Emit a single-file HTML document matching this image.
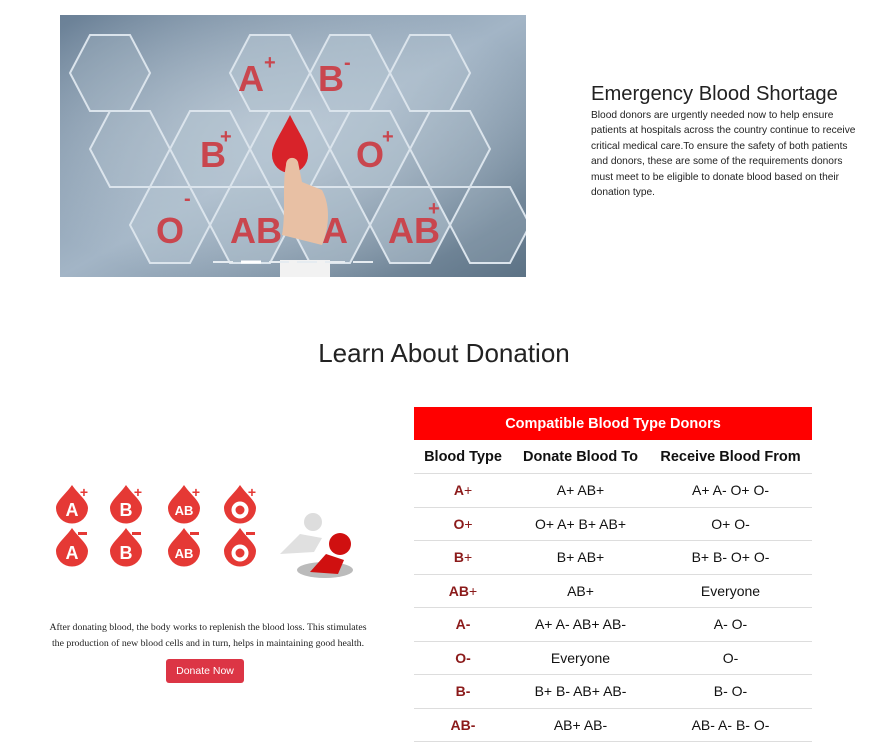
<!DOCTYPE html>
<html><head><meta charset="utf-8"><style>
*{margin:0;padding:0;box-sizing:border-box}
body{width:888px;height:753px;background:#fff;font-family:"Liberation Sans","DejaVu Sans",sans-serif;color:#212529;position:relative;overflow:hidden}
.abs{position:absolute}
h2{font-weight:400}
table{border-collapse:collapse;width:398px}
td,th{text-align:center;height:33.5px;border-bottom:1px solid #ddd;font-size:14px;color:#111}
th{font-weight:700;font-size:14.5px}
td.t{color:#8b1a1a;font-weight:700}
td.t span{font-weight:400}
</style></head><body>

<svg class="abs" style="left:60px;top:15px" width="466" height="262" viewBox="0 0 466 262">
<defs>
<linearGradient id="bg" x1="0" y1="0" x2="1" y2="1"><stop offset="0" stop-color="#6a8096"/><stop offset=".5" stop-color="#a3b5c6"/><stop offset="1" stop-color="#5c7285"/></linearGradient>
<radialGradient id="gl" cx=".45" cy=".45" r=".6"><stop offset="0" stop-color="#c8d4de" stop-opacity=".7"/><stop offset="1" stop-color="#c8d4de" stop-opacity="0"/></radialGradient>
</defs>
<rect width="466" height="262" fill="url(#bg)"/>
<rect width="466" height="262" fill="url(#gl)"/>
<g fill="#b3c2cf" fill-opacity=".55" stroke="#dbe4ec" stroke-width="2">
<polygon points="190,20 230,20 250,58 230,96 190,96 170,58"/>
<polygon points="270,20 310,20 330,58 310,96 270,96 250,58"/>
<polygon points="130,96 170,96 190,134 170,172 130,172 110,134"/>
<polygon points="210,96 250,96 270,134 250,172 210,172 190,134"/>
<polygon points="290,96 330,96 350,134 330,172 290,172 270,134"/>
<polygon points="90,172 130,172 150,210 130,248 90,248 70,210"/>
<polygon points="170,172 210,172 230,210 210,248 170,248 150,210"/>
<polygon points="250,172 290,172 310,210 290,248 250,248 230,210"/>
<polygon points="330,172 370,172 390,210 370,248 330,248 310,210"/>
<polygon points="30,20 70,20 90,58 70,96 30,96 10,58" fill-opacity=".25"/>
<polygon points="350,20 390,20 410,58 390,96 350,96 330,58" fill-opacity=".25"/>
<polygon points="50,96 90,96 110,134 90,172 50,172 30,134" fill-opacity=".25"/>
<polygon points="370,96 410,96 430,134 410,172 370,172 350,134" fill-opacity=".25"/>
<polygon points="410,172 450,172 470,210 450,248 410,248 390,210" fill-opacity=".25"/>
</g>
<g fill="#c9464e" font-family="Liberation Sans,sans-serif" font-weight="700" font-size="36">
<text x="178" y="76">A</text><text x="204" y="54" font-size="20">+</text>
<text x="258" y="76">B</text><text x="284" y="54" font-size="20">-</text>
<text x="140" y="152">B</text><text x="160" y="128" font-size="20">+</text>
<text x="296" y="152">O</text><text x="322" y="128" font-size="20">+</text>
<text x="96" y="228">O</text><text x="124" y="190" font-size="20">-</text>
<text x="170" y="228">AB</text><text x="262" y="228">A</text>
<text x="328" y="228">AB</text><text x="368" y="200" font-size="20">+</text>
</g>
<path d="M230 100 C220 120 212 130 212 140 a18 18 0 0 0 36 0 c0 -10 -8 -20 -18 -40z" fill="#d8232a"/>
<path d="M226 150 c-4 20 0 50 -4 70 l40 10 c8 -20 8 -40 0 -55 l-20 -8 l-4 -20 c-2 -6 -12 -6 -12 3z" fill="#e8c0a4"/>
<rect x="220" y="245" width="50" height="17" fill="#f2f2f2"/>
<g stroke="#e6ecf1" stroke-width="2"><line x1="153" y1="247" x2="173" y2="247"/><line x1="181" y1="247" x2="201" y2="247" stroke="#fff" stroke-width="3"/><line x1="209" y1="247" x2="229" y2="247"/><line x1="237" y1="247" x2="257" y2="247"/><line x1="265" y1="247" x2="285" y2="247"/><line x1="293" y1="247" x2="313" y2="247"/></g>
</svg>

<div class="abs" style="left:591px;top:83px;width:266px">
<div style="font-size:20.2px;color:#222;white-space:nowrap">Emergency Blood Shortage</div>
<div style="font-size:10.2px;line-height:15.4px;margin-top:2px;color:#222">Blood donors are urgently needed now to help ensure patients at hospitals across the country continue to receive critical medical care.To ensure the safety of both patients and donors, these are some of the requirements donors must meet to be eligible to donate blood based on their donation type.</div>
</div>

<h2 class="abs" style="left:0;width:888px;text-align:center;top:338px;font-size:26px;color:#222">Learn About Donation</h2>

<svg class="abs" style="left:50px;top:484px" width="320" height="100" viewBox="0 0 320 100">
<defs><g id="d"><path d="M18 1 C12 10 2 17 2 24 a16 15.5 0 0 0 32 0 c0 -7 -10 -14 -16 -23z" fill="#e53935"/></g></defs>
<g font-family="Liberation Sans,sans-serif" font-weight="700" fill="#fff" text-anchor="middle">
<use href="#d" x="4" y="0"/><text x="22" y="32" font-size="18">A</text>
<use href="#d" x="58" y="0"/><text x="76" y="32" font-size="18">B</text>
<use href="#d" x="116" y="0"/><text x="134" y="31" font-size="13">AB</text>
<use href="#d" x="172" y="0"/><circle cx="190" cy="26" r="6.5" fill="none" stroke="#fff" stroke-width="4"/>
<use href="#d" x="4" y="43"/><text x="22" y="75" font-size="18">A</text>
<use href="#d" x="58" y="43"/><text x="76" y="75" font-size="18">B</text>
<use href="#d" x="116" y="43"/><text x="134" y="74" font-size="13">AB</text>
<use href="#d" x="172" y="43"/><circle cx="190" cy="69" r="6.5" fill="none" stroke="#fff" stroke-width="4"/>
<g fill="#e53935" font-size="14"><text x="34" y="13">+</text><text x="88" y="13">+</text><text x="146" y="13">+</text><text x="202" y="13">+</text>
<rect x="28" y="48" width="9" height="3"/><rect x="82" y="48" width="9" height="3"/><rect x="140" y="48" width="9" height="3"/><rect x="196" y="48" width="9" height="3"/></g>
</g>
<ellipse cx="275" cy="86" rx="28" ry="8" fill="#bbb"/>
<circle cx="263" cy="38" r="9" fill="#ddd"/><path d="M230 70 l20 -20 l22 4 l-8 14 z" fill="#e0e0e0"/>
<circle cx="290" cy="60" r="11" fill="#d01010"/><path d="M260 88 l16 -18 l18 6 l-6 14 z" fill="#d01010"/>
</svg>

<div class="abs" style="left:43px;top:620px;width:330px;text-align:center;font-family:'Liberation Serif',serif;font-size:9.8px;line-height:16px;color:#222">After donating blood, the body works to replenish the blood loss. This stimulates the production of new blood cells and in turn, helps in maintaining good health.</div>
<div class="abs" style="left:166px;top:659px;width:78px;height:24px;background:#dc3545;border-radius:3px;color:#fff;font-size:10.5px;text-align:center;line-height:24px">Donate Now</div>

<div class="abs" style="left:414px;top:407px">
<div style="background:#ff0000;color:#fff;font-weight:700;font-size:14.5px;height:33px;line-height:34px;text-align:center;width:398px">Compatible Blood Type Donors</div>
<table>
<colgroup><col style="width:98px"><col style="width:137px"><col style="width:163px"></colgroup>
<tr><th>Blood Type</th><th>Donate Blood To</th><th>Receive Blood From</th></tr>
<tr><td class="t">A<span>+</span></td><td>A+ AB+</td><td>A+ A- O+ O-</td></tr>
<tr><td class="t">O<span>+</span></td><td>O+ A+ B+ AB+</td><td>O+ O-</td></tr>
<tr><td class="t">B<span>+</span></td><td>B+ AB+</td><td>B+ B- O+ O-</td></tr>
<tr><td class="t">AB<span>+</span></td><td>AB+</td><td>Everyone</td></tr>
<tr><td class="t">A-</td><td>A+ A- AB+ AB-</td><td>A- O-</td></tr>
<tr><td class="t">O-</td><td>Everyone</td><td>O-</td></tr>
<tr><td class="t">B-</td><td>B+ B- AB+ AB-</td><td>B- O-</td></tr>
<tr><td class="t">AB-</td><td>AB+ AB-</td><td>AB- A- B- O-</td></tr>
</table>
</div>
</body></html>
